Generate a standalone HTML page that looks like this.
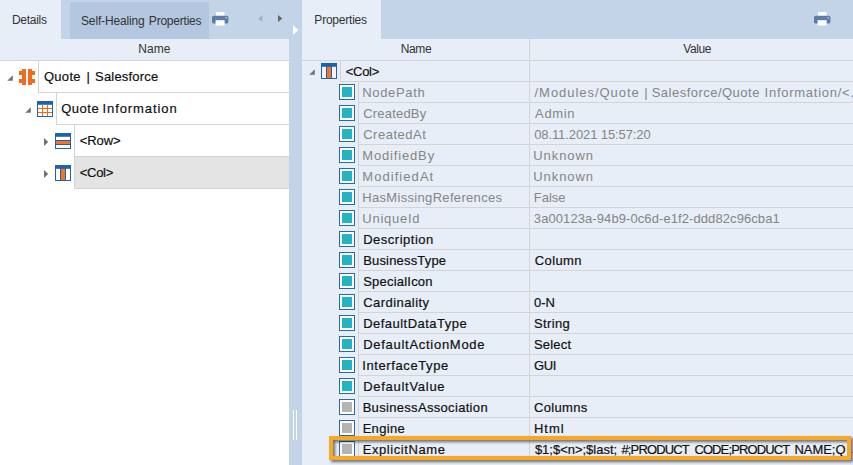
<!DOCTYPE html>
<html><head><meta charset="utf-8"><title>Properties</title>
<style>
html,body{margin:0;padding:0}
body{width:853px;height:465px;overflow:hidden;position:relative;background:#fff;font-family:"Liberation Sans",sans-serif;color:#111}
.a{position:absolute}
.t{position:absolute;white-space:nowrap;line-height:1}
.tc{position:absolute;white-space:pre;line-height:1;width:853px;height:13px}
.hl{position:absolute;background:#d4d4d4;height:1px}
.vl{position:absolute;background:#d4d4d4;width:1px}
.f13{font-size:13px;-webkit-text-stroke:0.2px}
.f14{font-size:14px}
.f12{font-size:12px}
.g{color:#858585;-webkit-text-stroke:0}
.ic{position:absolute;width:16px;height:16px}
</style></head><body>

<div class="a" style="left:0;top:0;width:302px;height:39px;background:#c4d4e8"></div>
<div class="a" style="left:0;top:0;width:61px;height:39px;background:#e7eef7"></div>
<div class="a" style="left:70px;top:2px;width:139px;height:37px;background:#b3c7e0"></div>
<div class="a" style="left:0;top:39px;width:289px;height:21px;background:#e7eef7"></div>
<div class="a" style="left:289px;top:0;width:13px;height:465px;background:#c4d4e8"></div>
<div class="a" style="left:302px;top:0;width:551px;height:465px;background:#e7eef7"></div>
<div class="a" style="left:381px;top:0;width:472px;height:39px;background:#c4d4e8"></div>
<div class="t f12" id="tDetails" style="left:12.0px;top:14px;color:#333;letter-spacing:-0.3px">Details</div>
<div class="tc f12" style="left:0;top:15px;color:#333"><span class="t" id="tSelf_0" style="left:81.0px;top:0px;letter-spacing:-0.147px">Self-Healing</span> <span class="t" id="tSelf_1" style="left:148.86px;top:0px;letter-spacing:-0.22px">Properties</span></div>
<div class="t f12" id="tProps" style="left:314.36px;top:14px;color:#333;letter-spacing:-0.22px">Properties</div>
<div class="t f12" id="tNameL" style="left:138.18px;top:43px;color:#333;letter-spacing:0.06px">Name</div>
<div class="t f12" id="tNameR" style="left:400.72px;top:43px;color:#333;letter-spacing:-0.36px">Name</div>
<div class="t f12" id="tValue" style="left:683.26px;top:43px;color:#333;letter-spacing:-0.405px">Value</div>
<svg class="a" style="left:212px;top:12px" width="17" height="14" viewBox="0 0 17 14"><rect x="4" y="0" width="8.5" height="5" rx="1" fill="#fff"/><rect x="0" y="3.8" width="16.4" height="7.8" rx="1.6" fill="#5b7ea8"/><rect x="3.6" y="8.2" width="9" height="5.3" fill="#fff"/><rect x="13.6" y="5.2" width="1.2" height="1.2" fill="#e8eef6"/></svg>
<svg class="a" style="left:814px;top:12px" width="17" height="14" viewBox="0 0 17 14"><rect x="4" y="0" width="8.5" height="5" rx="1" fill="#fff"/><rect x="0" y="3.8" width="16.4" height="7.8" rx="1.6" fill="#5b7ea8"/><rect x="3.6" y="8.2" width="9" height="5.3" fill="#fff"/><rect x="13.6" y="5.2" width="1.2" height="1.2" fill="#e8eef6"/></svg>
<svg class="a" style="left:258px;top:15px" width="5" height="7" viewBox="0 0 5 7"><path d="M4.4 0 L4.4 7 L0 3.5Z" fill="#a3b1c6"/></svg>
<svg class="a" style="left:278px;top:15px" width="5" height="7" viewBox="0 0 5 7"><path d="M0 0 L0 7 L4.4 3.5Z" fill="#666"/></svg>
<svg class="a" style="left:293px;top:25px" width="6" height="10" viewBox="0 0 6 10"><path d="M0 0 L0 10 L5.2 5Z" fill="#fff"/></svg>
<div class="a" style="left:293px;top:410px;width:1px;height:30px;background:#fff"></div>
<div class="a" style="left:296px;top:410px;width:1px;height:30px;background:#fff"></div>
<div class="hl" style="left:0;top:60px;width:289px"></div>
<div class="a" style="left:38px;top:61px;width:251px;height:32px;border-left:1px solid #d4d4d4;border-bottom:1px solid #d4d4d4;box-sizing:border-box"></div>
<div class="a" style="left:56px;top:93px;width:233px;height:32px;border-left:1px solid #d4d4d4;border-bottom:1px solid #d4d4d4;box-sizing:border-box"></div>
<div class="a" style="left:74px;top:125px;width:215px;height:32px;border-left:1px solid #d4d4d4;border-bottom:1px solid #d4d4d4;box-sizing:border-box"></div>
<div class="a" style="left:74px;top:157px;width:215px;height:32px;background:#e4e4e4;border-left:1px solid #d4d4d4;border-bottom:1px solid #d4d4d4;box-sizing:border-box"></div>
<svg class="a" style="left:7px;top:75px" width="6" height="6" viewBox="0 0 6 6"><path d="M5.8 0.2 L5.8 5.8 L0.2 5.8Z" fill="#727272"/></svg>
<svg class="a" style="left:25px;top:107px" width="6" height="6" viewBox="0 0 6 6"><path d="M5.8 0.2 L5.8 5.8 L0.2 5.8Z" fill="#727272"/></svg>
<svg class="a" style="left:44px;top:138px" width="5" height="8" viewBox="0 0 5 8"><path d="M0 0 L0 8 L4.2 4Z" fill="#707070"/></svg>
<svg class="a" style="left:44px;top:170px" width="5" height="8" viewBox="0 0 5 8"><path d="M0 0 L0 8 L4.2 4Z" fill="#707070"/></svg>
<svg class="ic" style="left:19px;top:69px" viewBox="0 0 16 16"><path d="M3 0 H7 V16 H3 V14 H0 V10 H3 V6 H0 V2 H3Z" fill="#f26a1b"/><path d="M13 0 H9 V16 H13 V14 H16 V10 H13 V6 H16 V2 H13Z" fill="#f26a1b"/></svg>
<svg class="ic" style="left:37px;top:101px" viewBox="0 0 16 16"><rect x="0" y="0" width="16" height="16" fill="#1c62b0"/><rect x="1" y="3.8" width="14" height="11.2" fill="#fff"/><path d="M5.5 3.8 V15 M10.5 3.8 V15 M1 7.5 H15 M1 11.5 H15" stroke="#f26a1b" stroke-width="1" fill="none"/></svg>
<svg class="ic" style="left:55px;top:133px" viewBox="0 0 16 16"><rect x="0" y="0" width="16" height="16" fill="#1c62b0"/><rect x="1" y="3.8" width="14" height="3.2" fill="#fff"/><rect x="1" y="8" width="14" height="3" fill="#f9731c"/><rect x="1" y="12" width="14" height="3" fill="#fff"/></svg>
<svg class="ic" style="left:55px;top:165px" viewBox="0 0 16 16"><rect x="0" y="0" width="16" height="16" fill="#1c62b0"/><rect x="1" y="3.8" width="4" height="11.2" fill="#fff"/><rect x="6" y="3.8" width="4" height="11.2" fill="#f9731c"/><rect x="11" y="3.8" width="4" height="11.2" fill="#fff"/></svg>
<div class="tc f13" style="left:0;top:70px"><span class="t" id="tQS_0" style="left:43.9px;top:0px;letter-spacing:0.315px">Quote</span> <span class="t" id="tQS_1" style="left:86.56px;top:0px;letter-spacing:0.0px">|</span> <span class="t" id="tQS_2" style="left:95.02px;top:0px;letter-spacing:0.2px">Salesforce</span></div>
<div class="tc f13" style="left:0;top:102px"><span class="t" id="tQI_0" style="left:61.18px;top:0px;letter-spacing:0.54px">Quote</span> <span class="t" id="tQI_1" style="left:102.58px;top:0px;letter-spacing:0.9px">Information</span></div>
<div class="t f13" id="tRow" style="left:79.72px;top:134px;letter-spacing:-0.09px">&lt;Row&gt;</div>
<div class="t f13" id="tCol" style="left:79.72px;top:166px;letter-spacing:-0.27px">&lt;Col&gt;</div>
<div class="hl" style="left:302px;top:60px;width:551px"></div>
<div class="vl" style="left:529px;top:39px;height:421px"></div>
<div class="a" style="left:340px;top:61px;width:513px;height:21px;border-left:1px solid #d4d4d4;border-bottom:1px solid #d4d4d4;box-sizing:border-box"></div>
<svg class="a" style="left:309px;top:69px" width="6" height="6" viewBox="0 0 6 6"><path d="M5.8 0.2 L5.8 5.8 L0.2 5.8Z" fill="#727272"/></svg>
<svg class="ic" style="left:321px;top:63px" viewBox="0 0 16 16"><rect x="0" y="0" width="16" height="16" fill="#1c62b0"/><rect x="1" y="3.8" width="4" height="11.2" fill="#f1f5fa"/><rect x="6" y="3.8" width="4" height="11.2" fill="#f9731c"/><rect x="11" y="3.8" width="4" height="11.2" fill="#f1f5fa"/></svg>
<div class="t f13" id="tCol2" style="left:345.72px;top:65px;letter-spacing:-0.27px">&lt;Col&gt;</div>
<div class="a" style="left:358px;top:82px;width:495px;height:21px;border-left:1px solid #d4d4d4;border-bottom:1px solid #d4d4d4;box-sizing:border-box"></div>
<svg class="ic" style="left:339px;top:84px" viewBox="0 0 16 16"><rect x="0.5" y="0.5" width="15" height="15" fill="#fff" stroke="#2a67ad"/><rect x="3" y="3" width="10" height="10" fill="#22b3c4"/></svg>
<div class="t f13 g" id="n0" style="left:362.28px;top:86px;letter-spacing:0.669px">NodePath</div>
<div class="tc f13 g" style="left:0;top:86px"><span class="t" id="v0_0" style="left:534.54px;top:0px;letter-spacing:0.955px">/Modules/Quote</span> <span class="t" id="v0_1" style="left:644.16px;top:0px;letter-spacing:0.0px">|</span> <span class="t" id="v0_2" style="left:651.72px;top:0px;letter-spacing:0.48px">Salesforce/Quote</span> <span class="t" id="v0_3" style="left:764.58px;top:0px;letter-spacing:0.733px">Information/&lt;.</span></div>
<div class="a" style="left:358px;top:103px;width:495px;height:21px;border-left:1px solid #d4d4d4;border-bottom:1px solid #d4d4d4;box-sizing:border-box"></div>
<svg class="ic" style="left:339px;top:105px" viewBox="0 0 16 16"><rect x="0.5" y="0.5" width="15" height="15" fill="#fff" stroke="#2a67ad"/><rect x="3" y="3" width="10" height="10" fill="#22b3c4"/></svg>
<div class="t f13 g" id="n1" style="left:363.18px;top:107px;letter-spacing:0.204px">CreatedBy</div>
<div class="t f13 g" id="v1" style="left:535.08px;top:107px;letter-spacing:0.63px">Admin</div>
<div class="a" style="left:358px;top:124px;width:495px;height:21px;border-left:1px solid #d4d4d4;border-bottom:1px solid #d4d4d4;box-sizing:border-box"></div>
<svg class="ic" style="left:339px;top:126px" viewBox="0 0 16 16"><rect x="0.5" y="0.5" width="15" height="15" fill="#fff" stroke="#2a67ad"/><rect x="3" y="3" width="10" height="10" fill="#22b3c4"/></svg>
<div class="t f13 g" id="n2" style="left:363.18px;top:128px;letter-spacing:0.517px">CreatedAt</div>
<div class="t f13 g" id="v2" style="left:534.18px;top:128px;letter-spacing:-0.1px">08.11.2021 15:57:20</div>
<div class="a" style="left:358px;top:145px;width:495px;height:21px;border-left:1px solid #d4d4d4;border-bottom:1px solid #d4d4d4;box-sizing:border-box"></div>
<svg class="ic" style="left:339px;top:147px" viewBox="0 0 16 16"><rect x="0.5" y="0.5" width="15" height="15" fill="#fff" stroke="#2a67ad"/><rect x="3" y="3" width="10" height="10" fill="#22b3c4"/></svg>
<div class="t f13 g" id="n3" style="left:362.28px;top:149px;letter-spacing:0.84px">ModifiedBy</div>
<div class="t f13 g" id="v3" style="left:533.28px;top:149px;letter-spacing:0.93px">Unknown</div>
<div class="a" style="left:358px;top:166px;width:495px;height:21px;border-left:1px solid #d4d4d4;border-bottom:1px solid #d4d4d4;box-sizing:border-box"></div>
<svg class="ic" style="left:339px;top:168px" viewBox="0 0 16 16"><rect x="0.5" y="0.5" width="15" height="15" fill="#fff" stroke="#2a67ad"/><rect x="3" y="3" width="10" height="10" fill="#22b3c4"/></svg>
<div class="t f13 g" id="n4" style="left:362.28px;top:170px;letter-spacing:1.06px">ModifiedAt</div>
<div class="t f13 g" id="v4" style="left:533.28px;top:170px;letter-spacing:0.93px">Unknown</div>
<div class="a" style="left:358px;top:187px;width:495px;height:21px;border-left:1px solid #d4d4d4;border-bottom:1px solid #d4d4d4;box-sizing:border-box"></div>
<svg class="ic" style="left:339px;top:189px" viewBox="0 0 16 16"><rect x="0.5" y="0.5" width="15" height="15" fill="#fff" stroke="#2a67ad"/><rect x="3" y="3" width="10" height="10" fill="#22b3c4"/></svg>
<div class="t f13 g" id="n5" style="left:362.28px;top:191px;letter-spacing:0.321px">HasMissingReferences</div>
<div class="t f13 g" id="v5" style="left:533.82px;top:191px;letter-spacing:-0.001px">False</div>
<div class="a" style="left:358px;top:208px;width:495px;height:21px;border-left:1px solid #d4d4d4;border-bottom:1px solid #d4d4d4;box-sizing:border-box"></div>
<svg class="ic" style="left:339px;top:210px" viewBox="0 0 16 16"><rect x="0.5" y="0.5" width="15" height="15" fill="#fff" stroke="#2a67ad"/><rect x="3" y="3" width="10" height="10" fill="#22b3c4"/></svg>
<div class="t f13 g" id="n6" style="left:362.28px;top:212px;letter-spacing:0.747px">UniqueId</div>
<div class="t f13 g" id="v6" style="left:533.82px;top:212px;letter-spacing:0.087px">3a00123a-94b9-0c6d-e1f2-ddd82c96cba1</div>
<div class="a" style="left:358px;top:229px;width:495px;height:21px;border-left:1px solid #d4d4d4;border-bottom:1px solid #d4d4d4;box-sizing:border-box"></div>
<svg class="ic" style="left:339px;top:231px" viewBox="0 0 16 16"><rect x="0.5" y="0.5" width="15" height="15" fill="#fff" stroke="#2a67ad"/><rect x="3" y="3" width="10" height="10" fill="#22b3c4"/></svg>
<div class="t f13" id="n7" style="left:363.18px;top:233px;letter-spacing:0.504px">Description</div>
<div class="a" style="left:358px;top:250px;width:495px;height:21px;border-left:1px solid #d4d4d4;border-bottom:1px solid #d4d4d4;box-sizing:border-box"></div>
<svg class="ic" style="left:339px;top:252px" viewBox="0 0 16 16"><rect x="0.5" y="0.5" width="15" height="15" fill="#fff" stroke="#2a67ad"/><rect x="3" y="3" width="10" height="10" fill="#22b3c4"/></svg>
<div class="t f13" id="n8" style="left:363.18px;top:254px;letter-spacing:0.18px">BusinessType</div>
<div class="t f13" id="v8" style="left:534.72px;top:254px;letter-spacing:0.396px">Column</div>
<div class="a" style="left:358px;top:271px;width:495px;height:21px;border-left:1px solid #d4d4d4;border-bottom:1px solid #d4d4d4;box-sizing:border-box"></div>
<svg class="ic" style="left:339px;top:273px" viewBox="0 0 16 16"><rect x="0.5" y="0.5" width="15" height="15" fill="#fff" stroke="#2a67ad"/><rect x="3" y="3" width="10" height="10" fill="#22b3c4"/></svg>
<div class="t f13" id="n9" style="left:363.18px;top:275px;letter-spacing:0.216px">SpecialIcon</div>
<div class="a" style="left:358px;top:292px;width:495px;height:21px;border-left:1px solid #d4d4d4;border-bottom:1px solid #d4d4d4;box-sizing:border-box"></div>
<svg class="ic" style="left:339px;top:294px" viewBox="0 0 16 16"><rect x="0.5" y="0.5" width="15" height="15" fill="#fff" stroke="#2a67ad"/><rect x="3" y="3" width="10" height="10" fill="#22b3c4"/></svg>
<div class="t f13" id="n10" style="left:363.18px;top:296px;letter-spacing:0.45px">Cardinality</div>
<div class="t f13" id="v10" style="left:534.0px;top:296px;letter-spacing:0.0px">0-N</div>
<div class="a" style="left:358px;top:313px;width:495px;height:21px;border-left:1px solid #d4d4d4;border-bottom:1px solid #d4d4d4;box-sizing:border-box"></div>
<svg class="ic" style="left:339px;top:315px" viewBox="0 0 16 16"><rect x="0.5" y="0.5" width="15" height="15" fill="#fff" stroke="#2a67ad"/><rect x="3" y="3" width="10" height="10" fill="#22b3c4"/></svg>
<div class="t f13" id="n11" style="left:363.18px;top:317px;letter-spacing:0.475px">DefaultDataType</div>
<div class="t f13" id="v11" style="left:534.0px;top:317px;letter-spacing:0.36px">String</div>
<div class="a" style="left:358px;top:334px;width:495px;height:21px;border-left:1px solid #d4d4d4;border-bottom:1px solid #d4d4d4;box-sizing:border-box"></div>
<svg class="ic" style="left:339px;top:336px" viewBox="0 0 16 16"><rect x="0.5" y="0.5" width="15" height="15" fill="#fff" stroke="#2a67ad"/><rect x="3" y="3" width="10" height="10" fill="#22b3c4"/></svg>
<div class="t f13" id="n12" style="left:363.18px;top:338px;letter-spacing:0.72px">DefaultActionMode</div>
<div class="t f13" id="v12" style="left:534.0px;top:338px;letter-spacing:0.18px">Select</div>
<div class="a" style="left:358px;top:355px;width:495px;height:21px;border-left:1px solid #d4d4d4;border-bottom:1px solid #d4d4d4;box-sizing:border-box"></div>
<svg class="ic" style="left:339px;top:357px" viewBox="0 0 16 16"><rect x="0.5" y="0.5" width="15" height="15" fill="#fff" stroke="#2a67ad"/><rect x="3" y="3" width="10" height="10" fill="#22b3c4"/></svg>
<div class="t f13" id="n13" style="left:362.28px;top:359px;letter-spacing:0.6px">InterfaceType</div>
<div class="t f13" id="v13" style="left:534.0px;top:359px;letter-spacing:-0.36px">GUI</div>
<div class="a" style="left:358px;top:376px;width:495px;height:21px;border-left:1px solid #d4d4d4;border-bottom:1px solid #d4d4d4;box-sizing:border-box"></div>
<svg class="ic" style="left:339px;top:378px" viewBox="0 0 16 16"><rect x="0.5" y="0.5" width="15" height="15" fill="#fff" stroke="#2a67ad"/><rect x="3" y="3" width="10" height="10" fill="#22b3c4"/></svg>
<div class="t f13" id="n14" style="left:363.18px;top:380px;letter-spacing:0.72px">DefaultValue</div>
<div class="a" style="left:358px;top:397px;width:495px;height:21px;border-left:1px solid #d4d4d4;border-bottom:1px solid #d4d4d4;box-sizing:border-box"></div>
<svg class="ic" style="left:339px;top:399px" viewBox="0 0 16 16"><rect x="0.5" y="0.5" width="15" height="15" fill="#fff" stroke="#2a67ad"/><rect x="3" y="3" width="10" height="10" fill="#b4b4b4"/></svg>
<div class="t f13" id="n15" style="left:362.64px;top:401px;letter-spacing:0.32px">BusinessAssociation</div>
<div class="t f13" id="v15" style="left:534.0px;top:401px;letter-spacing:0.33px">Columns</div>
<div class="a" style="left:358px;top:418px;width:495px;height:21px;border-left:1px solid #d4d4d4;border-bottom:1px solid #d4d4d4;box-sizing:border-box"></div>
<svg class="ic" style="left:339px;top:420px" viewBox="0 0 16 16"><rect x="0.5" y="0.5" width="15" height="15" fill="#fff" stroke="#2a67ad"/><rect x="3" y="3" width="10" height="10" fill="#b4b4b4"/></svg>
<div class="t f13" id="n16" style="left:362.64px;top:422px;letter-spacing:0.324px">Engine</div>
<div class="t f13" id="v16" style="left:534.0px;top:422px;letter-spacing:0.96px">Html</div>
<div class="a" style="left:358px;top:439px;width:495px;height:21px;border-left:1px solid #d4d4d4;border-bottom:1px solid #d4d4d4;box-sizing:border-box"></div>
<svg class="ic" style="left:339px;top:441px" viewBox="0 0 16 16"><rect x="0.5" y="0.5" width="15" height="15" fill="#fff" stroke="#2a67ad"/><rect x="3" y="3" width="10" height="10" fill="#b4b4b4"/></svg>
<div class="t f13" id="n17" style="left:362.64px;top:443px;letter-spacing:0.589px">ExplicitName</div>
<div class="tc f13" style="left:0;top:443px"><span class="t" id="v17_0" style="left:534.9px;top:0px;letter-spacing:-0.014px">$1;$&lt;n&gt;;$last;</span> <span class="t" id="v17_1" style="left:621.48px;top:0px;letter-spacing:-0.855px">#;PRODUCT</span> <span class="t" id="v17_2" style="left:694.38px;top:0px;letter-spacing:-0.884px">CODE;PRODUCT</span> <span class="t" id="v17_3" style="left:794.46px;top:0px;letter-spacing:-0.036px">NAME;Q</span></div>
<div class="a" style="left:329px;top:436px;width:522px;height:24px;box-sizing:border-box;border:4px solid #f9a826;filter:drop-shadow(2px 2px 1.5px rgba(0,0,0,.55))"></div>
<div class="a" style="left:851px;top:452px;width:2px;height:1px;background:#5a6178"></div>
</body></html>
